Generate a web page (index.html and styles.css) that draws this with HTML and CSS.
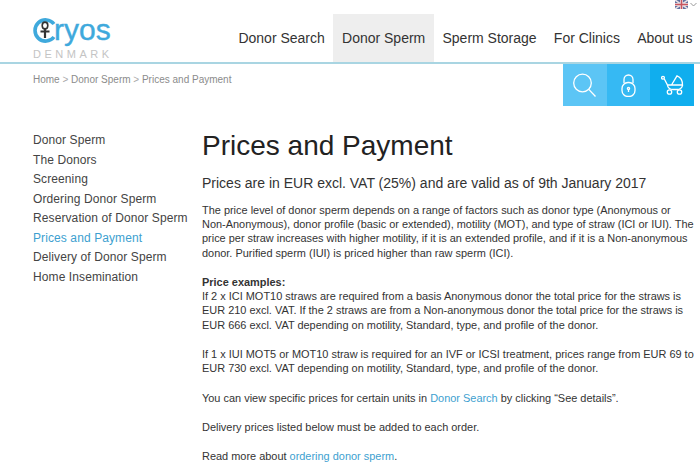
FILE: index.html
```html
<!doctype html>
<html lang="en">
  <head>
    <meta charset="UTF-8" />
    <title>Prices and Payment</title>
    <link rel="stylesheet" href="styles.css">
  </head>
  <body>
    <header class="header">
      <div class="lang">
        <svg width="13" height="9" viewBox="0 0 13 9">
          <rect width="13" height="9" fill="#5f6f9f"/>
          <path d="M0 0L13 9M13 0L0 9" stroke="#e8e0e4" stroke-width="1.5"/>
          <path d="M6.5 0V9M0 4.5H13" stroke="#e8e0e4" stroke-width="3"/>
          <path d="M6.5 0V9M0 4.5H13" stroke="#c9565f" stroke-width="1.5"/>
        </svg>
        <svg width="7" height="5" viewBox="0 0 7 5"><path d="M.5 1L3.5 4L6.5 1" fill="none" stroke="#999"/></svg>
      </div>
      <a class="logo">
        <span class="logo-word">
          <!-- the C of the logo, with the ankh inside -->
          <svg class="logo-c" width="24" height="25" viewBox="0 0 24 25" fill="none">
            <path d="M22 19A10.6 10.6 0 1 1 22 6" stroke="#3fa9dc" stroke-width="3.6"/>
            <ellipse cx="13" cy="7.5" rx="2.8" ry="3.4" stroke="#333" stroke-width="1.6"/>
            <path d="M13 11V20M8.5 13.5H17.5" stroke="#333" stroke-width="2.2"/>
          </svg>
          <span>ryos</span>
        </span>
        <span class="logo-sub">DENMARK</span>
      </a>
      <nav class="nav">
        <a>Donor Search</a>
        <a class="active">Donor Sperm</a>
        <a>Sperm Storage</a>
        <a>For Clinics</a>
        <a>About us</a>
      </nav>
    </header>

    <div class="subbar">
      <div class="crumbs">Home <i>&gt;</i> Donor Sperm <i>&gt;</i> Prices and Payment</div>
      <div class="tools">
        <a class="tool tool-search">
          <svg width="23" height="24" viewBox="0 0 23 24" fill="none" stroke="#fff" stroke-width="1.3"><circle cx="9.5" cy="10" r="8.8"/><path d="M15.8 16.4L22.5 23.5"/></svg>
        </a>
        <a class="tool tool-lock">
          <svg width="15" height="23" viewBox="0 0 15 23" fill="none" stroke="#fff" stroke-width="1.3"><path d="M3 9V5.5a4.5 4.5 0 0 1 9 0V9"/><rect x="1" y="8.5" width="13" height="14" rx="6"/><circle cx="7.5" cy="14.5" r="1.1"/><path d="M7.5 15.5V18"/></svg>
        </a>
        <a class="tool tool-cart">
          <svg width="23" height="20" viewBox="0 0 23 20" fill="none" stroke="#fff" stroke-width="1.3"><circle cx="2" cy="2.8" r="1.4"/><path d="M3.2 3.8L6.5 10H21.5C21.5 6 19.5 2 16 .8L10.5 10"/><path d="M6.5 10C6.5 12.5 9 14.5 12 14.5H16C19 14.5 21.5 12.5 21.5 10"/><circle cx="8.5" cy="17" r="2.2"/><circle cx="18.5" cy="17" r="2.2"/></svg>
        </a>
      </div>
    </div>

    <div class="container">
      <ul class="sidebar">
        <li>Donor Sperm</li>
        <li>The Donors</li>
        <li>Screening</li>
        <li>Ordering Donor Sperm</li>
        <li>Reservation of Donor Sperm</li>
        <li class="current">Prices and Payment</li>
        <li>Delivery of Donor Sperm</li>
        <li>Home Insemination</li>
      </ul>
      <main class="content">
        <h1>Prices and Payment</h1>
        <h2>Prices are in EUR excl. VAT (25%) and are valid as of 9th January 2017</h2>
        <p>The price level of donor sperm depends on a range of factors such as donor type (Anonymous or<br>Non-Anonymous), donor profile (basic or extended), motility (MOT), and type of straw (ICI or IUI). The<br>price per straw increases with higher motility, if it is an extended profile, and if it is a Non-anonymous<br>donor. Purified sperm (IUI) is priced higher than raw sperm (ICI).</p>
        <p><b>Price examples:</b><br>If 2 x ICI MOT10 straws are required from a basis Anonymous donor the total price for the straws is<br>EUR 210 excl. VAT. If the 2 straws are from a Non-anonymous donor the total price for the straws is<br>EUR 666 excl. VAT depending on motility, Standard, type, and profile of the donor.</p>
        <p>If 1 x IUI MOT5 or MOT10 straw is required for an IVF or ICSI treatment, prices range from EUR 69 to<br>EUR 730 excl. VAT depending on motility, Standard, type, and profile of the donor.</p>
        <p>You can view specific prices for certain units in <a>Donor Search</a> by clicking “See details”.</p>
        <p>Delivery prices listed below must be added to each order.</p>
        <p>Read more about <a>ordering donor sperm</a>.</p>
      </main>
    </div>
  </body>
</html>
```

FILE: styles.css
```css
html,
body {
  margin: 0;
  height: 470px;
  overflow: hidden;
}

body {
  background: #fff;
  color: #333;
  font-family: "Liberation Sans", Arial, sans-serif;
  font-size: 12px;
}

.header {
  position: relative;
  display: flex;
  justify-content: space-between;
  align-items: flex-end;
  height: 62px;
  padding: 0 0 0 32px;
  border-bottom: 2px solid #a9d5e2;
}

.lang {
  position: absolute;
  top: 0;
  right: 3px;
  display: flex;
  align-items: center;
  gap: 2px;
}

.logo {
  display: flex;
  flex-direction: column;
  margin-bottom: 2px;
}

.logo-word {
  display: flex;
  height: 30px;
  color: #3fa9dc;
  font-size: 30px;
  line-height: 30px;
  -webkit-text-stroke: 0.4px #3fa9dc;
}

.logo-c {
  flex: none;
  margin: 3px -2px 0 0;
}

.logo-sub {
  margin: 3px 0 0 1px;
  color: #c4c4c4;
  font-size: 11px;
  line-height: 12px;
  letter-spacing: 3.5px;
}

.nav {
  display: flex;
  height: 48px;
  margin-right: -1px;
}

.nav a {
  padding: 16px 8.6px 0;
  color: #333;
  font-size: 14px;
}

.nav a.active {
  background: #eee;
}

.subbar {
  display: flex;
  justify-content: space-between;
  height: 42px;
}

.crumbs {
  padding: 10px 0 0 33px;
  color: #8b8b8b;
  font-size: 10px;
}

.crumbs i {
  font-style: normal;
  color: #aaa;
}

.tools {
  display: flex;
  margin-right: 6px;
}

.tool {
  display: flex;
  align-items: center;
  justify-content: center;
  width: 43.7px;
  height: 42px;
}

.tool-search {
  background: #5cc5f5;
}

.tool-lock {
  background: #36b9f3;
}

.tool-cart {
  background: #10aeee;
}

.container {
  display: flex;
  padding: 22px 0 0 33px;
}

.sidebar {
  flex: none;
  width: 169px;
  margin: 0;
  padding: 3px 0 0;
  list-style: none;
  color: #444;
  font-size: 12px;
  line-height: 19.5px;
  letter-spacing: 0.1px;
}

.sidebar .current {
  color: #3d9fd0;
}

.content h1 {
  margin: 0;
  color: #222;
  font-size: 28px;
  font-weight: 400;
  line-height: 36px;
}

.content h2 {
  margin: 10px 0 11px;
  color: #333;
  font-size: 14px;
  font-weight: 400;
  line-height: 18px;
}

.content p {
  margin: 0 0 15.2px;
  font-size: 10.95px;
  line-height: 14.2px;
}

.content a {
  color: #3d9fd0;
}
```
